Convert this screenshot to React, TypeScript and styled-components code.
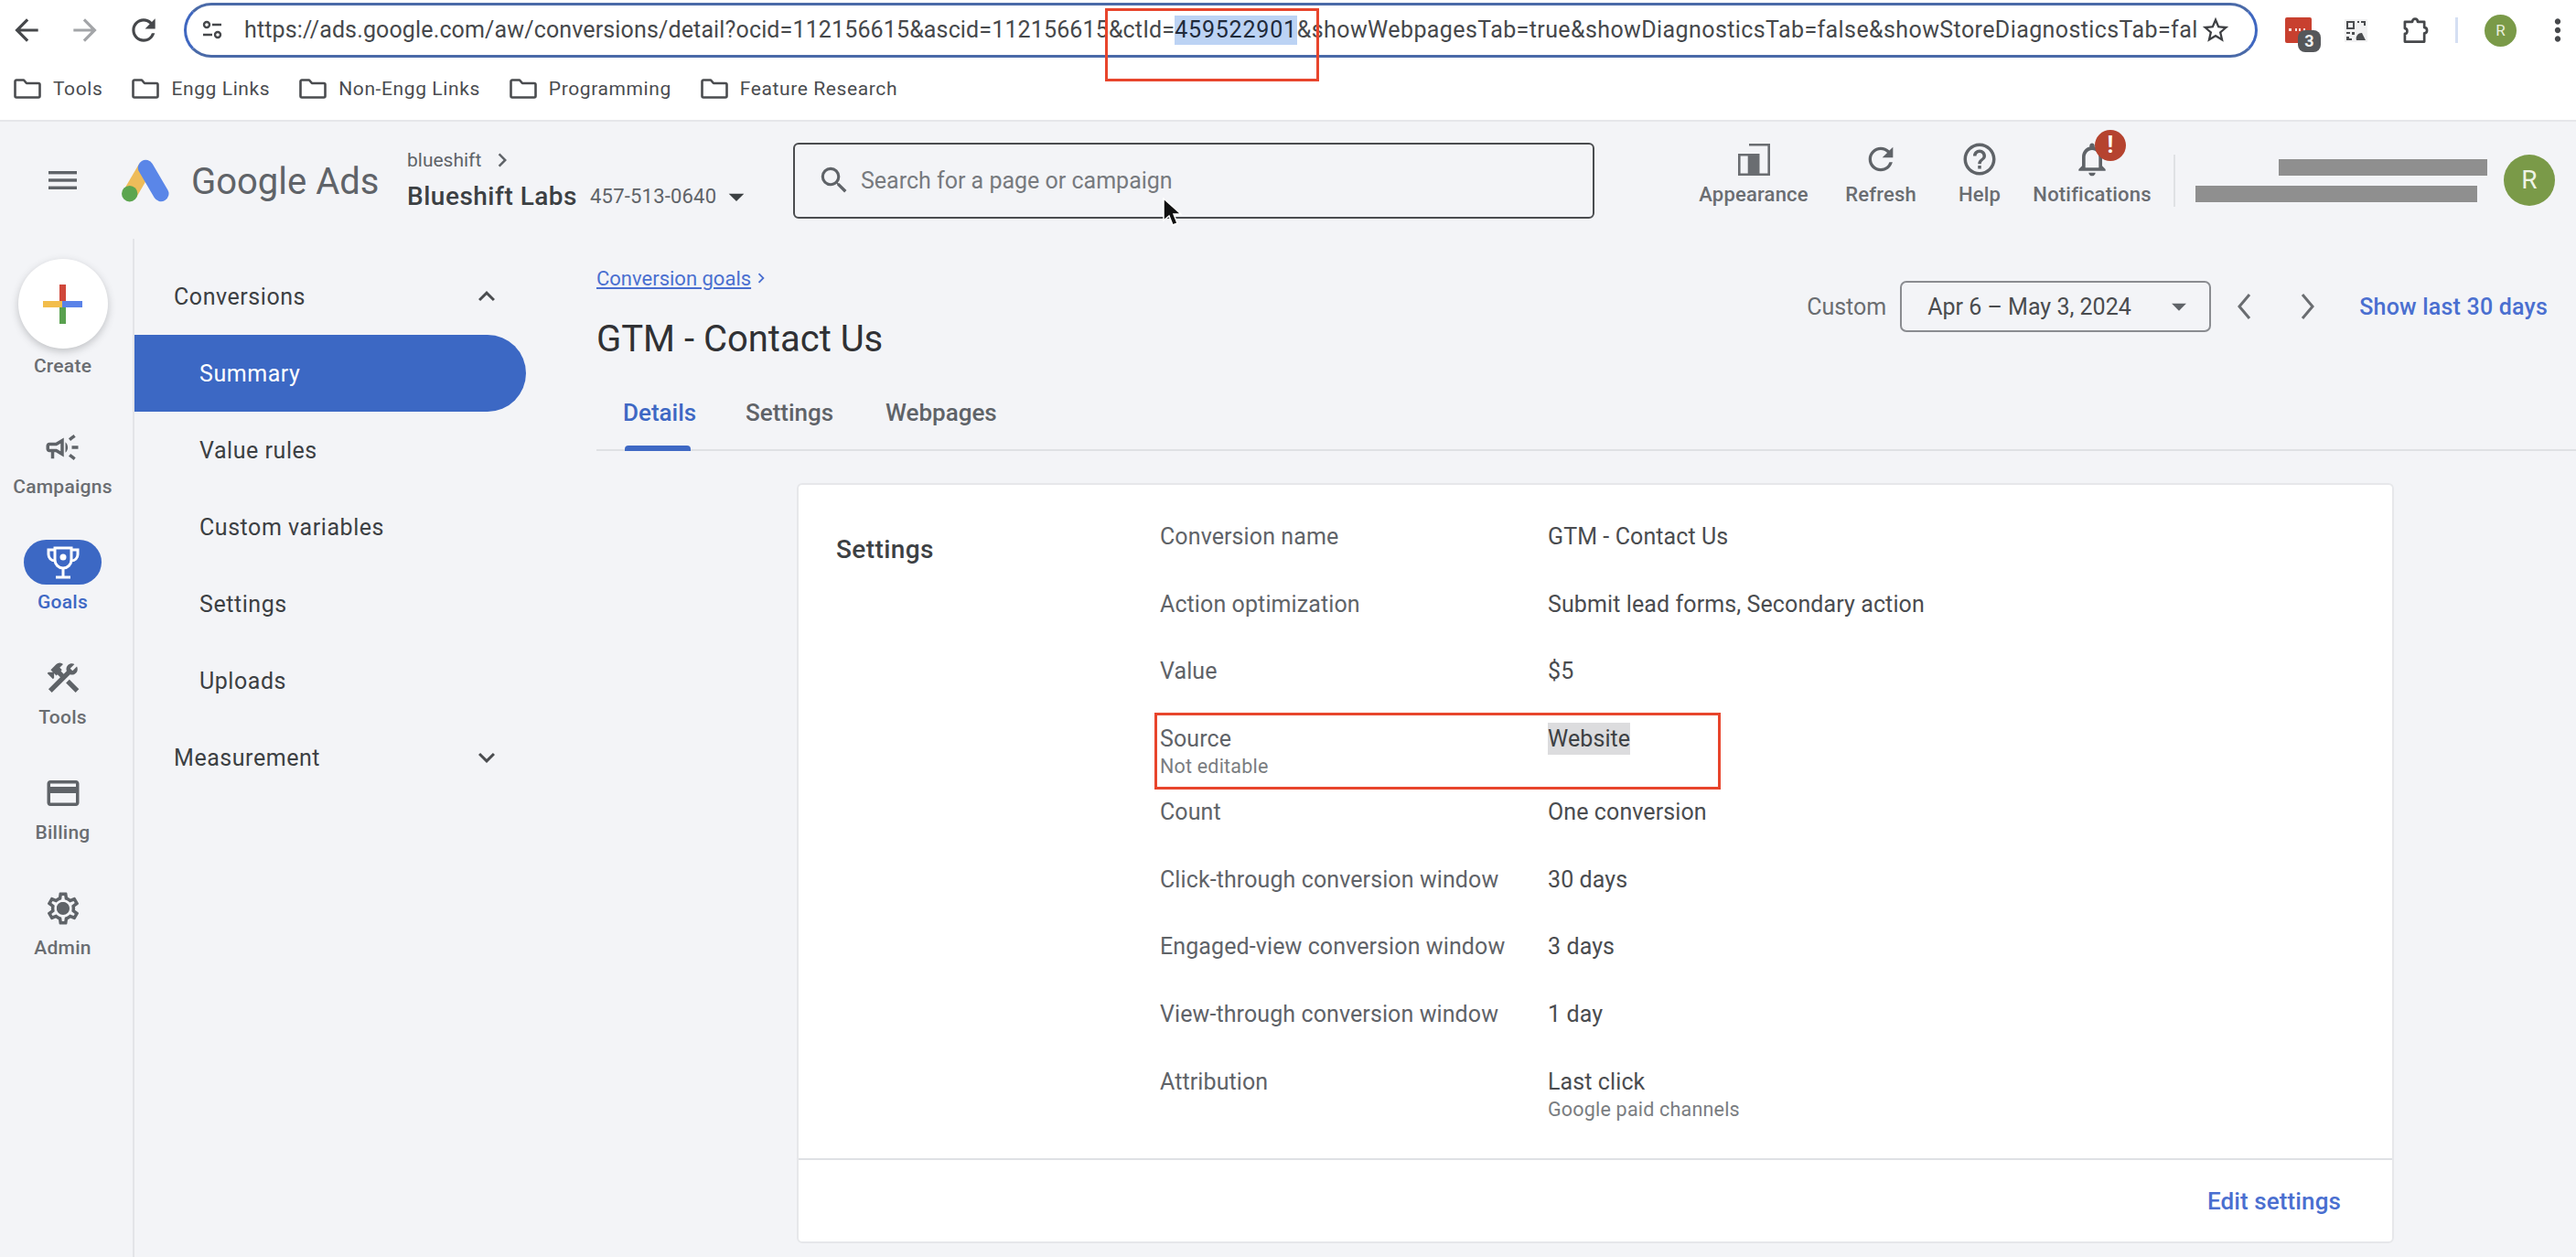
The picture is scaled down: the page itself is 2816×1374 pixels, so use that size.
import styled, { createGlobalStyle } from "styled-components"
import {
    MdArrowBack, MdArrowForward, MdRefresh, MdStarBorder, MdMoreVert,
    MdSearch, MdHelpOutline, MdOutlineNotifications, MdArrowDropDown, MdOutlineCampaign,
    MdConstruction, MdCreditCard, MdOutlineSettings, MdKeyboardArrowUp, MdKeyboardArrowDown,
    MdChevronRight
} from "react-icons/md"

const GlobalStyle = createGlobalStyle`
    html, body { margin: 0; padding: 0; background: #f3f4f7; }
    * { box-sizing: border-box; }
    body { font-family: Roboto, "Liberation Sans", sans-serif; }
`

const Page = styled.div`
    position: relative;
    width: 2816px;
    height: 1374px;
    overflow: hidden;
    display: flex;
    flex-direction: column;
    background: #f3f4f7;
    color: #3c4043;
`

/* browser chrome */
const Chrome = styled.div`
    height: 133px;
    flex: none;
    background: #fff;
    border-bottom: 2px solid #e6e7ea;
`
const UrlRow = styled.div`
    height: 66px;
    padding: 3px 0 3px 9px;
    display: flex;
    align-items: center;
    gap: 24px;
`
const NavButton = styled.div<{ $dim?: boolean }>`
    width: 40px;
    height: 40px;
    display: flex;
    align-items: center;
    justify-content: center;
    color: ${p => (p.$dim ? "#a3a5a8" : "#46484b")};
    font-size: 38px;
`
const UrlBar = styled.div`
    width: 2267px;
    height: 60px;
    flex: none;
    display: flex;
    align-items: center;
    padding: 0 26px 0 17px;
    background: #fff;
    border: 3px solid #3f67c0;
    border-top-color: #4a6aa8;
    border-bottom-color: #4a6aa8;
    border-radius: 30px;
    color: #46484b;
`
const UrlText = styled.div`
    width: 2135px;
    margin-left: 24px;
    overflow: hidden;
    white-space: nowrap;
    font-size: 25px;
    line-height: 32px;
    letter-spacing: 0.14px;
`
const UrlTail = styled.span`
    letter-spacing: 0.4px;
`
const UrlSelected = styled.span`
    display: inline-block;
    letter-spacing: 0.8px;
    background: #bcd3f4;
    color: #1f2a3a;
`
const TextSelected = styled.span`
    display: inline-block;
    margin: -3px 0 -2px;
    line-height: 35px;
    background: #dcdcde;
    color: #3c4043;
`
const StarIcon = styled.div`
    margin-left: auto;
    display: flex;
    font-size: 34px;
    color: #3d3f42;
`
const ExtRow = styled.div`
    display: flex;
    align-items: center;
    margin-left: 6px;
`
const ExtSlot = styled.div<{ $ml: number; $w: number }>`
    position: relative;
    margin-left: ${p => p.$ml}px;
    width: ${p => p.$w}px;
    display: flex;
    align-items: center;
    justify-content: center;
    flex: none;
    color: #46484b;
`
const ExtBadge = styled.div`
    position: absolute;
    left: 14px;
    top: 14px;
    width: 25px;
    height: 24px;
    border-radius: 8px;
    background: #55575a;
    color: #f0f0f0;
    font-size: 18px;
    font-weight: 700;
    line-height: 24px;
    text-align: center;
`
const ToolbarSep = styled.div`
    width: 3px;
    height: 28px;
    background: #d5dff3;
`
const ProfileDot = styled.div`
    width: 35px;
    height: 35px;
    border-radius: 50%;
    background: #7a9a48;
    color: #e8efdc;
    font-size: 17px;
    line-height: 35px;
    text-align: center;
`
const Bookmarks = styled.div`
    height: 62px;
    padding-left: 15px;
    display: flex;
    align-items: center;
    gap: 32px;
`
const Bookmark = styled.div`
    display: flex;
    align-items: center;
    gap: 13px;
    font-size: 21px;
    letter-spacing: 0.6px;
    color: #4a4c4f;
`

/* google ads top bar */
const TopBar = styled.header`
    height: 128px;
    flex: none;
    display: flex;
    align-items: center;
    padding-left: 53px;
`
const LogoWrap = styled.div`
    margin-left: 49px;
    display: flex;
`
const Wordmark = styled.div`
    width: 260px;
    padding: 2px 0 0 24px;
    font-size: 40px;
    color: #5f6368;
    white-space: nowrap;
`
const Account = styled.div`
    width: 422px;
    display: flex;
    flex-direction: column;
    gap: 5px;
`
const AccountParent = styled.div`
    display: flex;
    align-items: center;
    gap: 8px;
    font-size: 21px;
    line-height: 28px;
    color: #5f6368;
`
const AccountRow = styled.div`
    display: flex;
    align-items: center;
    gap: 14px;
    line-height: 32px;
`
const AccountName = styled.span`
    font-size: 28px;
    font-weight: 500;
    letter-spacing: 0.5px;
    color: #3c4043;
`
const AccountId = styled.span`
    font-size: 22px;
    letter-spacing: 0.2px;
    color: #5f6368;
`
const CaretIcon = styled.span`
    display: flex;
    margin-left: -12px;
    font-size: 40px;
    color: #3c4043;
`
const SearchBox = styled.div`
    width: 876px;
    height: 83px;
    flex: none;
    display: flex;
    align-items: center;
    gap: 10px;
    padding-left: 24px;
    border: 2px solid #4a4c4f;
    border-radius: 6px;
    color: #777a7e;
    font-size: 25px;
`
const SearchIcon = styled.span`
    display: flex;
    font-size: 38px;
    color: #5f6368;
`
const Actions = styled.div`
    margin: 0 0 16px 105px;
    display: flex;
`
const Action = styled.div<{ $w: number }>`
    position: relative;
    width: ${p => p.$w}px;
    display: flex;
    flex-direction: column;
    align-items: center;
    gap: 4px;
    font-size: 22px;
    font-weight: 500;
    line-height: 26px;
    letter-spacing: 0.2px;
    color: #6a6d71;
`
const ActionIcon = styled.div<{ $size: number }>`
    height: 44px;
    display: flex;
    align-items: center;
    justify-content: center;
    font-size: ${p => p.$size}px;
    color: #5f6368;
`
const AlertBadge = styled.div`
    position: absolute;
    left: 88px;
    top: -10px;
    width: 34px;
    height: 34px;
    border-radius: 50%;
    background: #b5432f;
    color: #fff;
    font-size: 25px;
    font-weight: 700;
    line-height: 34px;
    text-align: center;
`
const HeaderSep = styled.div`
    width: 2px;
    height: 57px;
    margin-left: 4px;
    background: #dfe1e4;
`
const Redacted = styled.div`
    width: 319px;
    margin-left: 22px;
    display: flex;
    flex-direction: column;
    align-items: flex-end;
    gap: 11px;
`
const RedactedBar = styled.div<{ $w: number; $mr: number }>`
    width: ${p => p.$w}px;
    height: 18px;
    margin-right: ${p => p.$mr}px;
    background: #8f8f8f;
`
const Avatar = styled.div`
    width: 56px;
    height: 56px;
    margin-left: 18px;
    border-radius: 50%;
    background: #7a9a48;
    color: #eef3e4;
    font-size: 28px;
    line-height: 56px;
    text-align: center;
`

/* body */
const Body = styled.div`
    flex: 1;
    min-height: 0;
    display: flex;
`
const Rail = styled.nav`
    width: 147px;
    flex: none;
    padding: 22px 8px 0 0;
    display: flex;
    flex-direction: column;
    align-items: center;
    border-right: 2px solid #e3e4e8;
`
const CreateCircle = styled.div`
    width: 98px;
    height: 98px;
    flex: none;
    display: flex;
    align-items: center;
    justify-content: center;
    border-radius: 50%;
    background: #fff;
    box-shadow: 0 3px 8px rgba(60, 64, 67, 0.28);
`
const RailLabel = styled.div<{ $active?: boolean }>`
    font-size: 21px;
    font-weight: 500;
    line-height: 24px;
    letter-spacing: 0.25px;
    color: ${p => (p.$active ? "#3e68c4" : "#6a6d71")};
`
const CreateLabel = styled(RailLabel)`
    margin-top: 7px;
    margin-bottom: 52px;
`
const RailItem = styled.div`
    height: 126px;
    flex: none;
    display: flex;
    flex-direction: column;
    align-items: center;
    gap: 7px;
`
const RailIcon = styled.div<{ $active?: boolean }>`
    position: relative;
    width: 85px;
    height: 49px;
    display: flex;
    align-items: center;
    justify-content: center;
    border-radius: 25px;
    font-size: 42px;
    background: ${p => (p.$active ? "#3c68c4" : "transparent")};
    color: ${p => (p.$active ? "#fff" : "#5f6368")};
`
const GearDot = styled.span`
    position: absolute;
    left: 36px;
    top: 18px;
    width: 13px;
    height: 13px;
    border-radius: 50%;
    background: #5f6368;
`
const SecNav = styled.nav`
    width: 505px;
    flex: none;
    padding-top: 21px;
`
const NavGroup = styled.div`
    width: 428px;
    height: 84px;
    padding: 0 0 0 43px;
    display: flex;
    align-items: center;
    font-size: 25px;
    letter-spacing: 0.55px;
    color: #3c4043;
`
const NavChevron = styled.span`
    display: flex;
    margin-left: auto;
    margin-right: 25px;
    font-size: 36px;
    color: #4a4c4f;
`
const NavLink = styled.div<{ $active?: boolean }>`
    width: 428px;
    height: 84px;
    padding-left: 71px;
    display: flex;
    align-items: center;
    font-size: 25px;
    letter-spacing: 0.55px;
    border-radius: 0 43px 43px 0;
    background: ${p => (p.$active ? "#3c68c4" : "transparent")};
    color: ${p => (p.$active ? "#fff" : "#3c4043")};
`
const Main = styled.main`
    flex: 1;
    min-width: 0;
`
const PageHead = styled.div`
    display: flex;
    justify-content: space-between;
    padding: 31px 31px 0 0;
`
const Breadcrumb = styled.div`
    display: flex;
    align-items: center;
    height: 24px;
    font-size: 22px;
    color: #4a6fd0;
`
const CrumbLink = styled.a`
    text-decoration: underline;
`
const PageTitle = styled.h1`
    margin: 31px 0 0;
    font-size: 40px;
    font-weight: 400;
    line-height: 48px;
    color: #303134;
`
const DateControls = styled.div`
    height: 56px;
    margin-top: 15px;
    display: flex;
    align-items: center;
    font-size: 25px;
`
const DateLabel = styled.span`
    margin-right: 15px;
    color: #6a6d71;
`
const DateBox = styled.div`
    width: 340px;
    height: 56px;
    display: flex;
    align-items: center;
    justify-content: space-between;
    padding: 0 14px 0 28px;
    border: 2px solid #8a8c90;
    border-radius: 7px;
    color: #4a4c4f;
`
const DateCaret = styled.span`
    display: flex;
    font-size: 38px;
    color: #5f6368;
`
const DateNav = styled.span<{ $w: number }>`
    width: ${p => p.$w}px;
    display: flex;
    justify-content: center;
`
const ShowLast = styled.span`
    margin-left: 22px;
    font-weight: 500;
    letter-spacing: 0.2px;
    color: #4a6fd0;
`
const Tabs = styled.div`
    height: 84px;
    margin-top: 14px;
    padding-top: 2px;
    display: flex;
    border-bottom: 2px solid #dfe1e4;
`
const Tab = styled.div<{ $active?: boolean; $w: number }>`
    position: relative;
    width: ${p => p.$w}px;
    padding-left: 29px;
    display: flex;
    align-items: center;
    font-size: 26px;
    font-weight: 500;
    color: ${p => (p.$active ? "#3e68c4" : "#5f6368")};
    ${p =>
        p.$active &&
        `&::after {
            content: "";
            position: absolute;
            left: 31px;
            bottom: -2px;
            width: 72px;
            height: 6px;
            border-radius: 4px 4px 0 0;
            background: #3e68c4;
        }`}
`
const Card = styled.section`
    width: 1746px;
    height: 831px;
    margin: 35px 0 0 219px;
    display: flex;
    flex-direction: column;
    background: #fff;
    border: 2px solid #e6e7ea;
    border-radius: 6px;
`
const CardBody = styled.div`
    height: 738px;
    flex: none;
    display: flex;
    padding-top: 42px;
    border-bottom: 2px solid #dfe1e4;
`
const CardTitle = styled.h2`
    width: 395px;
    margin: 0;
    padding: 14px 0 0 41px;
    font-size: 28px;
    font-weight: 500;
    line-height: 30px;
    letter-spacing: 0.4px;
    color: #3c4043;
`
const Rows = styled.div`
    display: flex;
    flex-direction: column;
`
const Row = styled.div`
    min-height: 73.7px;
    padding-bottom: 20px;
    display: grid;
    grid-template-columns: 424px auto;
    justify-items: start;
    font-size: 25px;
    line-height: 30px;
    letter-spacing: 0.1px;
`
const RowLabel = styled.div`
    color: #5f6368;
`
const RowValue = styled.div`
    color: #4a4c4f;
`
const SubText = styled.div`
    font-size: 21.5px;
    line-height: 30px;
    letter-spacing: 0.2px;
    color: #7a7d81;
`
const CardFooter = styled.div`
    flex: 1;
    display: flex;
    align-items: center;
    justify-content: flex-end;
    padding-right: 56px;
    font-size: 26px;
    font-weight: 500;
    letter-spacing: 0.1px;
    color: #4a6fd0;
`
const Annotation = styled.div<{ $x: number; $y: number; $w: number; $h: number }>`
    position: absolute;
    left: ${p => p.$x}px;
    top: ${p => p.$y}px;
    width: ${p => p.$w}px;
    height: ${p => p.$h}px;
    border: 3px solid #e8452c;
    pointer-events: none;
`
const Cursor = styled.svg`
    position: absolute;
    left: 1270px;
    top: 216px;
`

const FolderIcon = () => (
    <svg width="30" height="22" viewBox="0 0 30 22" fill="none" stroke="#4a4c4f" strokeWidth="2.6" strokeLinejoin="round">
        <path d="M1.5 3a1.5 1.5 0 0 1 1.5-1.5h8l3 3.5h13a1.5 1.5 0 0 1 1.5 1.5V19a1.5 1.5 0 0 1-1.5 1.5H3A1.5 1.5 0 0 1 1.5 19z" />
    </svg>
)

const SiteInfoIcon = () => (
    <svg width="22" height="24" viewBox="0 0 22 24" fill="none" stroke="#46484b" strokeWidth="2.4">
        <circle cx="5" cy="6" r="3" />
        <path d="M11 6h10M1 17h10" />
        <circle cx="17" cy="17" r="3" />
    </svg>
)

const RedExtIcon = () => (
    <svg width="29" height="28" viewBox="0 0 29 28">
        <rect width="29" height="28" rx="2" fill="#c8402f" />
        <g fill="#f6dcd8">
            <rect x="4" y="12" width="3" height="3" />
            <rect x="11" y="12" width="2" height="3" />
            <rect x="15" y="12" width="2" height="3" />
            <rect x="20" y="12" width="2" height="3" />
        </g>
    </svg>
)

const QrIcon = () => (
    <svg width="25" height="25" viewBox="0 0 25 25">
        <rect width="25" height="25" fill="#f1f1f2" />
        <path d="M2 2h9v9H2zM4 4v5h5V4zM14 2h2v2h-2zM18 2h5v5h-2V4h-3zM2 14h4v2H2zM8 14h3v3H8zM2 19h3v2h3v2H2z" fill="#4a4c4f" fillRule="evenodd" />
        <path d="M13 23a6 6 0 0 1 6-8l4 8z" fill="#4a4c4f" />
    </svg>
)

const PuzzleIcon = () => (
    <svg width="30" height="30" viewBox="0 0 30 30" fill="none" stroke="#46484b" strokeWidth="2.8" strokeLinejoin="round">
        <path d="M3 5.5h8.5c0-4.500 6-4.500 6 0H25V12c4 0 4 6.500 0 6.500V28H3V19c3.500 0 3.500-6 0-6z" />
    </svg>
)

const HamburgerIcon = () => (
    <svg width="31" height="20" viewBox="0 0 31 20" fill="#5f6368">
        <rect width="31" height="3.4" />
        <rect y="8.3" width="31" height="3.4" />
        <rect y="16.600" width="31" height="3.4" />
    </svg>
)

const AdsLogo = () => (
    <svg width="52" height="47" viewBox="0 0 52 47" fill="none">
        <path d="M26 9L9 38" stroke="#eebc5a" strokeWidth="16" />
        <path d="M26.300 9.300L43 37.700" stroke="#5a86e8" strokeWidth="17" strokeLinecap="round" />
        <circle cx="8.700" cy="37.700" r="8.700" fill="#5ca54f" />
    </svg>
)

const AppearanceIcon = () => (
    <svg width="35" height="35" viewBox="0 0 35 35" fill="none" stroke="#6a6d71" strokeWidth="2.6">
        <path d="M1.300 12.300H12V33.700H1.300zM12 1.300H33.700V33.700H12" />
        <rect x="12" y="11" width="11.500" height="24" fill="#6a6d71" stroke="none" />
    </svg>
)

const PlusIcon = () => (
    <svg width="43" height="43" viewBox="0 0 43 43">
        <rect x="18" y="0" width="7" height="22" fill="#d0473a" />
        <rect x="18" y="21" width="7" height="22" fill="#59a14f" />
        <rect x="0" y="18" width="21" height="7" fill="#f2bd4b" />
        <rect x="21" y="18" width="22" height="7" fill="#5a82e8" />
    </svg>
)

const TrophyIcon = () => (
    <svg width="36" height="36" viewBox="0 0 36 36" fill="none" stroke="#fff" strokeWidth="3">
        <path d="M9 2h18v13a9 9 0 0 1-18 0z" />
        <path d="M9 4H2v5c0 4 3 7 7 7M27 4h7v5c0 4-3 7-7 7" />
        <path d="M18 24v9M10 34h16" />
        <circle cx="18" cy="12" r="3.500" fill="#fff" stroke="none" />
    </svg>
)

const ThinChevron = ({ left }: { left?: boolean }) => (
    <svg width="18" height="30" viewBox="0 0 18 30" fill="none" stroke="#6a6d71" strokeWidth="3">
        <path d={left ? "M15 2L4 15l11 13" : "M3 2l11 13L3 28"} />
    </svg>
)

const settingsRows = [
    { label: "Conversion name", value: "GTM - Contact Us" },
    { label: "Action optimization", value: "Submit lead forms, Secondary action" },
    { label: "Value", value: "$5" },
    { label: "Source", sub: "Not editable", value: "Website", selected: true },
    { label: "Count", value: "One conversion" },
    { label: "Click-through conversion window", value: "30 days" },
    { label: "Engaged-view conversion window", value: "3 days" },
    { label: "View-through conversion window", value: "1 day" },
    { label: "Attribution", value: "Last click", valueSub: "Google paid channels" },
]

const bookmarks = ["Tools", "Engg Links", "Non-Engg Links", "Programming", "Feature Research"]

const App = () => {
    return (
        <Page>
            <GlobalStyle />
            <Chrome>
                <UrlRow>
                    <NavButton><MdArrowBack /></NavButton>
                    <NavButton $dim><MdArrowForward /></NavButton>
                    <NavButton><MdRefresh /></NavButton>
                    <UrlBar>
                        <SiteInfoIcon />
                        <UrlText>
                            https://ads.google.com/aw/conversions/detail?ocid=112156615&ascid=112156615&ctId=
                            <UrlSelected>459522901</UrlSelected>
                            <UrlTail>&showWebpagesTab=true&showDiagnosticsTab=false&showStoreDiagnosticsTab=false</UrlTail>
                        </UrlText>
                        <StarIcon><MdStarBorder /></StarIcon>
                    </UrlBar>
                    <ExtRow>
                        <ExtSlot $ml={0} $w={29}>
                            <RedExtIcon />
                            <ExtBadge>3</ExtBadge>
                        </ExtSlot>
                        <ExtSlot $ml={36} $w={25}><QrIcon /></ExtSlot>
                        <ExtSlot $ml={38} $w={29}><PuzzleIcon /></ExtSlot>
                        <ExtSlot $ml={29} $w={3}><ToolbarSep /></ExtSlot>
                        <ExtSlot $ml={29} $w={35}><ProfileDot>R</ProfileDot></ExtSlot>
                        <ExtSlot $ml={25} $w={40}><MdMoreVert size={38} /></ExtSlot>
                    </ExtRow>
                </UrlRow>
                <Bookmarks>
                    {bookmarks.map(name => (
                        <Bookmark key={name}>
                            <FolderIcon />
                            {name}
                        </Bookmark>
                    ))}
                </Bookmarks>
            </Chrome>

            <TopBar>
                <HamburgerIcon />
                <LogoWrap><AdsLogo /></LogoWrap>
                <Wordmark>Google Ads</Wordmark>
                <Account>
                    <AccountParent>
                        blueshift
                        <MdChevronRight size={30} />
                    </AccountParent>
                    <AccountRow>
                        <AccountName>Blueshift Labs</AccountName>
                        <AccountId>457-513-0640</AccountId>
                        <CaretIcon><MdArrowDropDown /></CaretIcon>
                    </AccountRow>
                </Account>
                <SearchBox>
                    <SearchIcon><MdSearch /></SearchIcon>
                    Search for a page or campaign
                </SearchBox>
                <Actions>
                    <Action $w={138}>
                        <ActionIcon $size={35}><AppearanceIcon /></ActionIcon>
                        Appearance
                    </Action>
                    <Action $w={140}>
                        <ActionIcon $size={40}><MdRefresh /></ActionIcon>
                        Refresh
                    </Action>
                    <Action $w={76}>
                        <ActionIcon $size={42}><MdHelpOutline /></ActionIcon>
                        Help
                    </Action>
                    <Action $w={170}>
                        <ActionIcon $size={44}><MdOutlineNotifications /></ActionIcon>
                        Notifications
                        <AlertBadge>!</AlertBadge>
                    </Action>
                </Actions>
                <HeaderSep />
                <Redacted>
                    <RedactedBar $w={228} $mr={0} />
                    <RedactedBar $w={308} $mr={11} />
                </Redacted>
                <Avatar>R</Avatar>
            </TopBar>

            <Body>
                <Rail>
                    <CreateCircle><PlusIcon /></CreateCircle>
                    <CreateLabel>Create</CreateLabel>
                    <RailItem>
                        <RailIcon><MdOutlineCampaign /></RailIcon>
                        <RailLabel>Campaigns</RailLabel>
                    </RailItem>
                    <RailItem>
                        <RailIcon $active><TrophyIcon /></RailIcon>
                        <RailLabel $active>Goals</RailLabel>
                    </RailItem>
                    <RailItem>
                        <RailIcon><MdConstruction /></RailIcon>
                        <RailLabel>Tools</RailLabel>
                    </RailItem>
                    <RailItem>
                        <RailIcon><MdCreditCard /></RailIcon>
                        <RailLabel>Billing</RailLabel>
                    </RailItem>
                    <RailItem>
                        <RailIcon>
                            <MdOutlineSettings />
                            <GearDot />
                        </RailIcon>
                        <RailLabel>Admin</RailLabel>
                    </RailItem>
                </Rail>

                <SecNav>
                    <NavGroup>
                        Conversions
                        <NavChevron><MdKeyboardArrowUp /></NavChevron>
                    </NavGroup>
                    <NavLink $active>Summary</NavLink>
                    <NavLink>Value rules</NavLink>
                    <NavLink>Custom variables</NavLink>
                    <NavLink>Settings</NavLink>
                    <NavLink>Uploads</NavLink>
                    <NavGroup>
                        Measurement
                        <NavChevron><MdKeyboardArrowDown /></NavChevron>
                    </NavGroup>
                </SecNav>

                <Main>
                    <PageHead>
                        <div>
                            <Breadcrumb>
                                <CrumbLink>Conversion goals</CrumbLink>
                                <MdChevronRight size={22} />
                            </Breadcrumb>
                            <PageTitle>GTM - Contact Us</PageTitle>
                        </div>
                        <DateControls>
                            <DateLabel>Custom</DateLabel>
                            <DateBox>
                                Apr 6 – May 3, 2024
                                <DateCaret><MdArrowDropDown /></DateCaret>
                            </DateBox>
                            <DateNav $w={72}><ThinChevron left /></DateNav>
                            <DateNav $w={68}><ThinChevron /></DateNav>
                            <ShowLast>Show last 30 days</ShowLast>
                        </DateControls>
                    </PageHead>
                    <Tabs>
                        <Tab $active $w={134}>Details</Tab>
                        <Tab $w={153}>Settings</Tab>
                        <Tab $w={200}>Webpages</Tab>
                    </Tabs>
                    <Card>
                        <CardBody>
                            <CardTitle>Settings</CardTitle>
                            <Rows>
                                {settingsRows.map(row => (
                                    <Row key={row.label}>
                                        <RowLabel>
                                            {row.label}
                                            {row.sub && <SubText>{row.sub}</SubText>}
                                        </RowLabel>
                                        <RowValue>
                                            {row.selected ? <TextSelected>{row.value}</TextSelected> : row.value}
                                            {row.valueSub && <SubText>{row.valueSub}</SubText>}
                                        </RowValue>
                                    </Row>
                                ))}
                            </Rows>
                        </CardBody>
                        <CardFooter>Edit settings</CardFooter>
                    </Card>
                </Main>
            </Body>

            <Annotation $x={1208} $y={9} $w={234} $h={80} />
            <Annotation $x={1262} $y={779} $w={619} $h={84} />
            <Cursor width="22" height="32" viewBox="0 0 22 32">
                <path d="M2 1v24l6-5 4 10 5-2-4-10h8z" fill="#111" stroke="#fff" strokeWidth="1.5" />
            </Cursor>
        </Page>
    )
}

export default App
